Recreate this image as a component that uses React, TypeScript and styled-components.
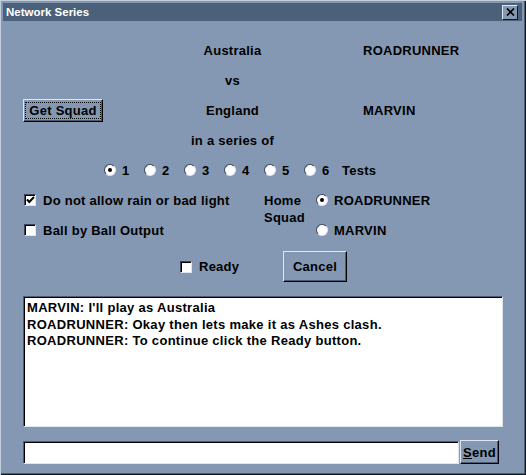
import styled, { createGlobalStyle } from 'styled-components';

const GlobalStyle = createGlobalStyle`
  html, body {
    margin: 0;
    padding: 0;
    background: #8498b3;
  }
  body {
    font-family: 'Liberation Sans', Arial, sans-serif;
  }
`;

const Window = styled.div`
  width: 526px;
  height: 475px;
  box-sizing: border-box;
  padding: 3px;
  display: flex;
  flex-direction: column;
  background: #8498b3;
  box-shadow: inset 1px 1px 0 #c4cfdc, inset -1px -1px 0 #101820, inset -2px -2px 0 #4b5d73;
  font: bold 13px 'Liberation Sans', Arial, sans-serif;
  letter-spacing: 0.25px;
  color: #000;
`;

const TitleBar = styled.div`
  height: 18px;
  display: flex;
  align-items: center;
  justify-content: space-between;
  padding: 0 4px 0 3px;
  margin-right: 1px;
  background: #4b6079;
  color: #fff;
  font-size: 11.5px;
  letter-spacing: 0;
`;

const CloseButton = styled.div`
  width: 16px;
  height: 15px;
  box-sizing: border-box;
  display: flex;
  align-items: center;
  justify-content: center;
  background: #8498b3;
  border: 1px solid;
  border-color: #dfe6ee #101820 #101820 #dfe6ee;
`;

const Body = styled.div`
  flex: 1;
  display: flex;
  flex-direction: column;
  padding: 14px 20px 0 20px;
`;

const TopGrid = styled.div`
  display: grid;
  grid-template-columns: 157px 105px 1fr;
  grid-auto-rows: 30px;
  align-items: center;
`;

const Center = styled.div`
  text-align: center;
  white-space: nowrap;
`;

const Name = styled.div`
  padding-left: 78px;
`;

const Button = styled.div<{ $w: number; $h: number }>`
  width: ${(p) => p.$w}px;
  height: ${(p) => p.$h}px;
  box-sizing: border-box;
  display: flex;
  align-items: center;
  justify-content: center;
  background: #8498b3;
  border: 1px solid;
  border-color: #dfe6ee #000 #000 #dfe6ee;
  box-shadow: inset -1px -1px 0 #4b5d73;
`;

const FocusRect = styled.span`
  padding: 0 3px;
  line-height: 15px;
  border: 1px dotted #000;
`;

const RadioRow = styled.div`
  height: 30px;
  display: flex;
  align-items: center;
  padding-left: 81px;
`;

const RadioItem = styled.div<{ $w?: number }>`
  width: ${(p) => (p.$w ? `${p.$w}px` : 'auto')};
  display: flex;
  align-items: center;
  gap: 6px;
  white-space: nowrap;
`;

const RadioDot = styled.span<{ $on?: boolean }>`
  width: 12px;
  height: 12px;
  box-sizing: border-box;
  flex: none;
  border-radius: 50%;
  background: #fff;
  border: 1px solid;
  border-color: #3a4656 #dfe6ee #dfe6ee #3a4656;
  display: flex;
  align-items: center;
  justify-content: center;

  &::after {
    content: '';
    width: 4px;
    height: 4px;
    border-radius: 50%;
    background: ${(p) => (p.$on ? '#000' : 'transparent')};
  }
`;

const OptionsRow = styled.div`
  display: flex;
`;

const CheckColumn = styled.div`
  width: 240px;
  padding-left: 1px;
  display: grid;
  grid-auto-rows: 30px;
  align-items: center;
`;

const CheckItem = styled.div<{ $w?: number }>`
  width: ${(p) => (p.$w ? `${p.$w}px` : 'auto')};
  display: flex;
  align-items: center;
  gap: 7px;
  white-space: nowrap;
`;

const CheckBox = styled.span`
  width: 12px;
  height: 12px;
  box-sizing: border-box;
  flex: none;
  background: #fff;
  border: 1px solid;
  border-color: #3a4656 #dfe6ee #dfe6ee #3a4656;
  box-shadow: inset 1px 1px 0 #000;
  display: flex;
  align-items: center;
  justify-content: center;
`;

const HomeLabel = styled.div`
  width: 52px;
  line-height: 17px;
  padding-top: 7px;
`;

const RadioColumn = styled.div`
  display: grid;
  grid-auto-rows: 30px;
  align-items: center;
`;

const ReadyRow = styled.div`
  margin-top: 6px;
  display: flex;
  align-items: center;
  padding-left: 157px;
`;

const ChatBox = styled.div`
  margin-top: 14px;
  height: 131px;
  box-sizing: border-box;
  background: #fff;
  border: 1px solid;
  border-color: #4b5d73 #dfe6ee #dfe6ee #4b5d73;
  box-shadow: inset 1px 1px 0 #000;
  padding: 3px 3px;
  line-height: 16.5px;
  letter-spacing: 0.3px;
`;

const InputRow = styled.div`
  margin-top: 13px;
  display: flex;
  align-items: center;
  gap: 1px;
`;

const TextInput = styled.div`
  width: 436px;
  height: 23px;
  box-sizing: border-box;
  background: #fff;
  border: 1px solid;
  border-color: #4b5d73 #dfe6ee #dfe6ee #4b5d73;
  box-shadow: inset 1px 1px 0 #000;
`;

const Underline = styled.span`
  text-decoration: underline;
`;

const Check = () => (
  <svg width="9" height="8" viewBox="0 0 9 8">
    <path d="M1 3.5 L3.3 6 L8 1" stroke="#000" strokeWidth="2" fill="none" />
  </svg>
);

const counts = [1, 2, 3, 4, 5, 6];

export default function App() {
  return (
    <>
      <GlobalStyle />
      <Window>
        <TitleBar>
          <span>Network Series</span>
          <CloseButton>
            <svg width="9" height="8" viewBox="0 0 9 8">
              <path d="M1 0.5 L8 7.5 M8 0.5 L1 7.5" stroke="#000" strokeWidth="1.7" />
            </svg>
          </CloseButton>
        </TitleBar>
        <Body>
          <TopGrid>
            <div />
            <Center>Australia</Center>
            <Name>ROADRUNNER</Name>
            <div />
            <Center>vs</Center>
            <div />
            <Button $w={80} $h={23}>
              <FocusRect>Get Squad</FocusRect>
            </Button>
            <Center>England</Center>
            <Name>MARVIN</Name>
            <div />
            <Center>in a series of</Center>
            <div />
          </TopGrid>
          <RadioRow>
            {counts.map((n) => (
              <RadioItem key={n} $w={n === 6 ? 38 : 40}>
                <RadioDot $on={n === 1} />
                {n}
              </RadioItem>
            ))}
            <span>Tests</span>
          </RadioRow>
          <OptionsRow>
            <CheckColumn>
              <CheckItem>
                <CheckBox>
                  <Check />
                </CheckBox>
                Do not allow rain or bad light
              </CheckItem>
              <CheckItem>
                <CheckBox />
                Ball by Ball Output
              </CheckItem>
            </CheckColumn>
            <HomeLabel>
              Home
              <br />
              Squad
            </HomeLabel>
            <RadioColumn>
              <RadioItem>
                <RadioDot $on />
                ROADRUNNER
              </RadioItem>
              <RadioItem>
                <RadioDot />
                MARVIN
              </RadioItem>
            </RadioColumn>
          </OptionsRow>
          <ReadyRow>
            <CheckItem $w={103}>
              <CheckBox />
              Ready
            </CheckItem>
            <Button $w={64} $h={31}>Cancel</Button>
          </ReadyRow>
          <ChatBox>
            <div>MARVIN: I'll play as Australia</div>
            <div>ROADRUNNER: Okay then lets make it as Ashes clash.</div>
            <div>ROADRUNNER: To continue click the Ready button.</div>
          </ChatBox>
          <InputRow>
            <TextInput />
            <Button $w={39} $h={24}>
              <Underline>S</Underline>end
            </Button>
          </InputRow>
        </Body>
      </Window>
    </>
  );
}
